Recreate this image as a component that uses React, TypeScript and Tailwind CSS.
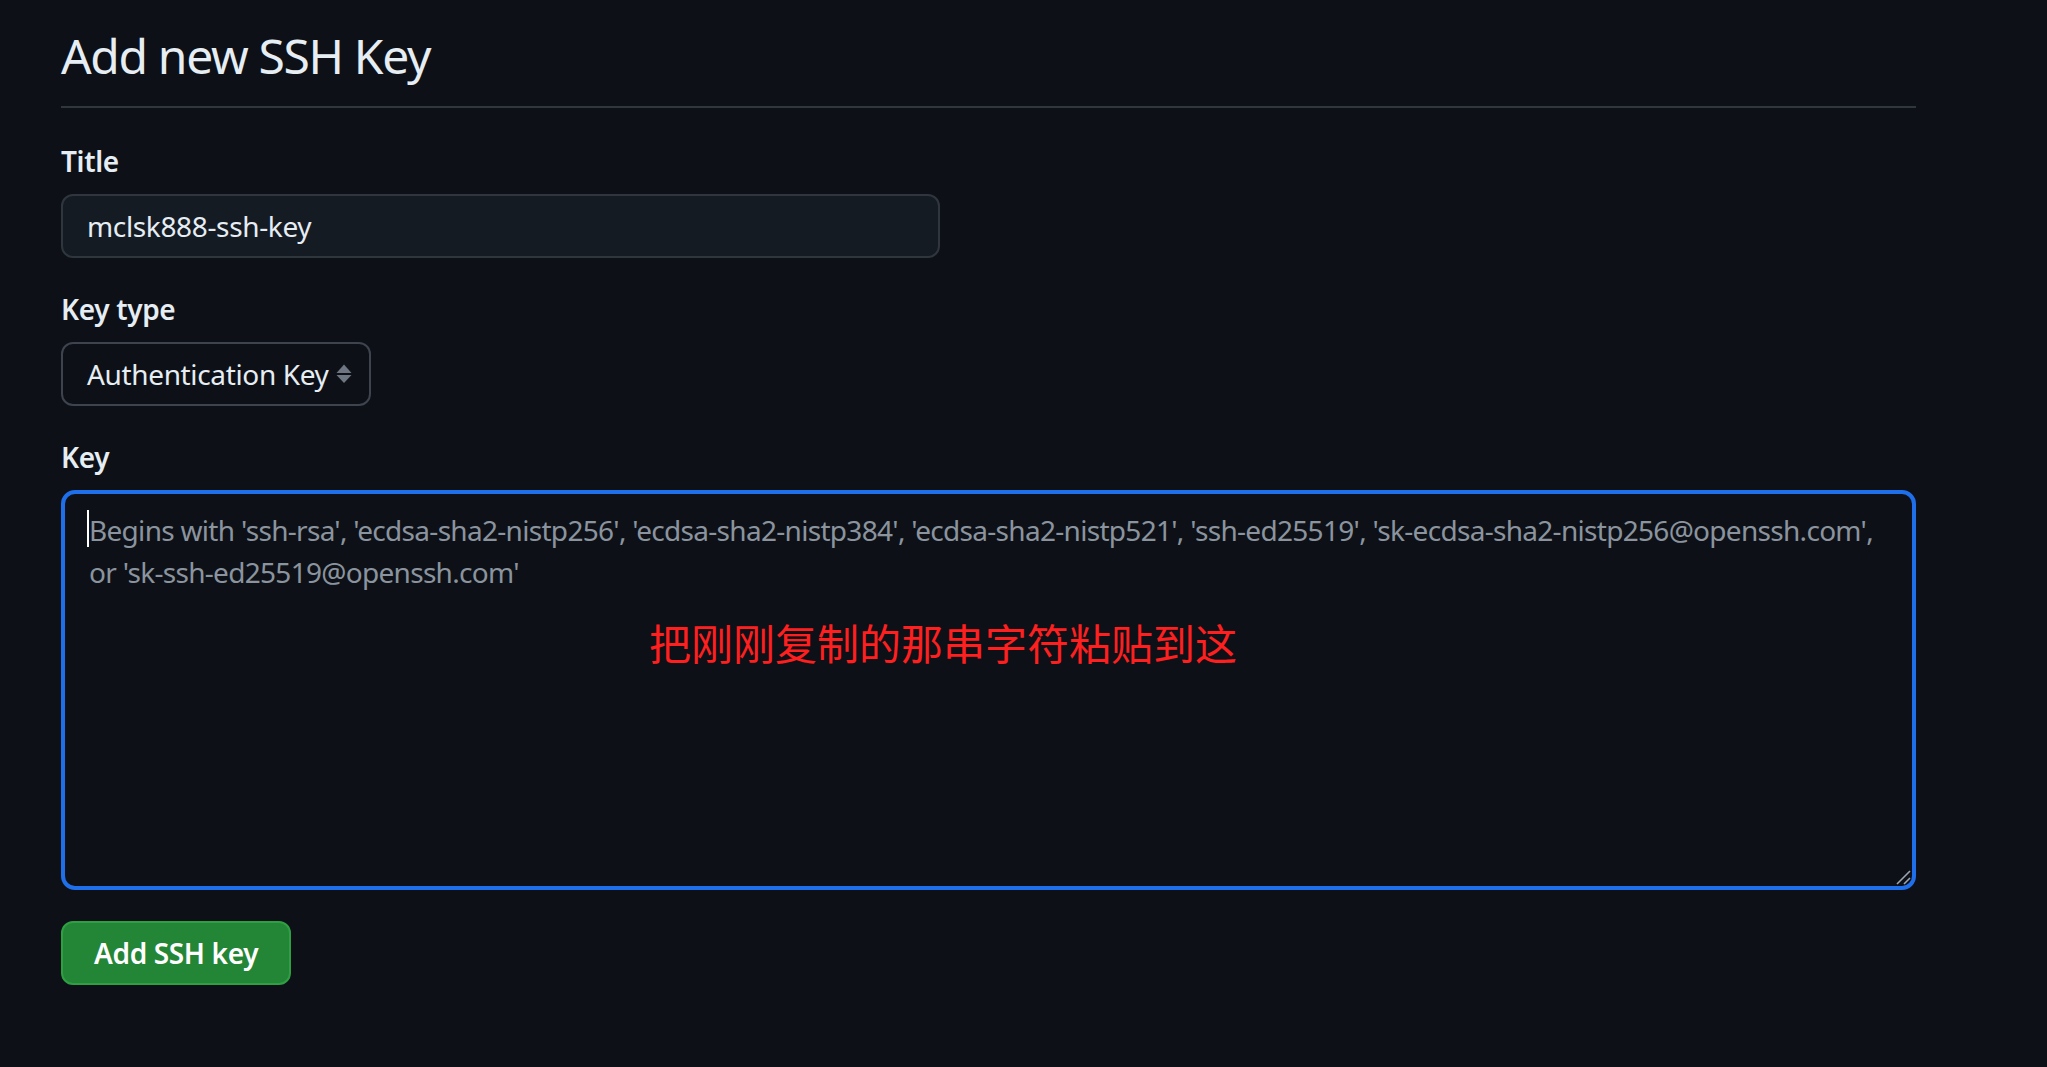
import React from 'react';

const FONT = { fontFamily: '"Noto Sans", "Liberation Sans", sans-serif' };

function SelectArrows() {
  return (
    <svg width="16" height="20" viewBox="0 0 16 20" className="shrink-0">
      <polygon points="0.5,9 8,0.5 15.5,9" fill="#6e7681" />
      <polygon points="0.5,11 8,19 15.5,11" fill="#6e7681" />
    </svg>
  );
}

function ResizeGrip() {
  return (
    <svg width="16" height="16" viewBox="0 0 16 16" className="absolute right-[1px] bottom-[1px]">
      <line x1="2" y1="15" x2="15" y2="2" stroke="#9da5ae" strokeWidth="1.6" />
      <line x1="9" y1="15" x2="15" y2="9" stroke="#9da5ae" strokeWidth="1.6" />
    </svg>
  );
}

export default function App() {
  return (
    <div className="min-h-screen bg-[#0d1117] text-[#e6edf3] tracking-[-0.022em]" style={FONT}>
      <div className="pl-[61px] pt-[20px]">
        <div className="w-[1855px]">
          {/* Subhead */}
          <div className="border-b-2 border-[#30363d] pb-[14px]">
            <h1 className="text-[48px] leading-[72px] font-normal tracking-[-0.028em]">Add new SSH Key</h1>
          </div>

          <form className="mt-[32px]" onSubmit={e => e.preventDefault()}>
            <div>
              <label className="block text-[28px] leading-[42px] font-semibold mb-[12px]">Title</label>
              <div className="w-[879px] h-[64px] flex items-center rounded-[12px] border-2 border-[#30363d] bg-[#151b23] pl-[24px] text-[28px]">
                mclsk888-ssh-key
              </div>
            </div>

            <div className="mt-[30px]">
              <label className="block text-[28px] leading-[42px] font-semibold mb-[12px]">Key type</label>
              <div className="w-[310px] h-[64px] flex items-center justify-between rounded-[12px] border-2 border-[#3d444d] bg-[#0d1117] pl-[24px] pr-[17px] text-[28px]">
                <span className="whitespace-nowrap">Authentication Key</span>
                <SelectArrows />
              </div>
            </div>

            <div className="mt-[30px]">
              <label className="block text-[28px] leading-[42px] font-semibold mb-[12px]">Key</label>
              <div className="relative h-[400px] rounded-[14px] border-4 border-[#1f6feb] bg-[#0d1117] pl-[24px] pr-[22px] pt-[15px]">
                <span className="absolute left-[22px] top-[16px] w-[2px] h-[37px] bg-white" />
                <p className="text-[28px] leading-[42px] text-[#8b949e] whitespace-nowrap tracking-[-0.025em]">
                  Begins with 'ssh-rsa', 'ecdsa-sha2-nistp256', 'ecdsa-sha2-nistp384', 'ecdsa-sha2-nistp521', 'ssh-ed25519', 'sk-ecdsa-sha2-nistp256@openssh.com',
                  <br />
                  or 'sk-ssh-ed25519@openssh.com'
                </p>
                <span
                  className="absolute left-[584px] top-[127px] text-[42px] leading-none text-[#ff1f1f] whitespace-nowrap tracking-normal"
                  style={{ fontFamily: '"Noto Sans CJK SC", sans-serif' }}
                >
                  把刚刚复制的那串字符粘贴到这
                </span>
                <ResizeGrip />
              </div>
            </div>

            <button
              type="submit"
              className="mt-[31px] h-[64px] px-[31px] rounded-[12px] border-2 border-[#2ea043] bg-[#238636] text-white text-[28px] font-semibold"
            >
              Add SSH key
            </button>
          </form>
        </div>
      </div>
    </div>
  );
}
